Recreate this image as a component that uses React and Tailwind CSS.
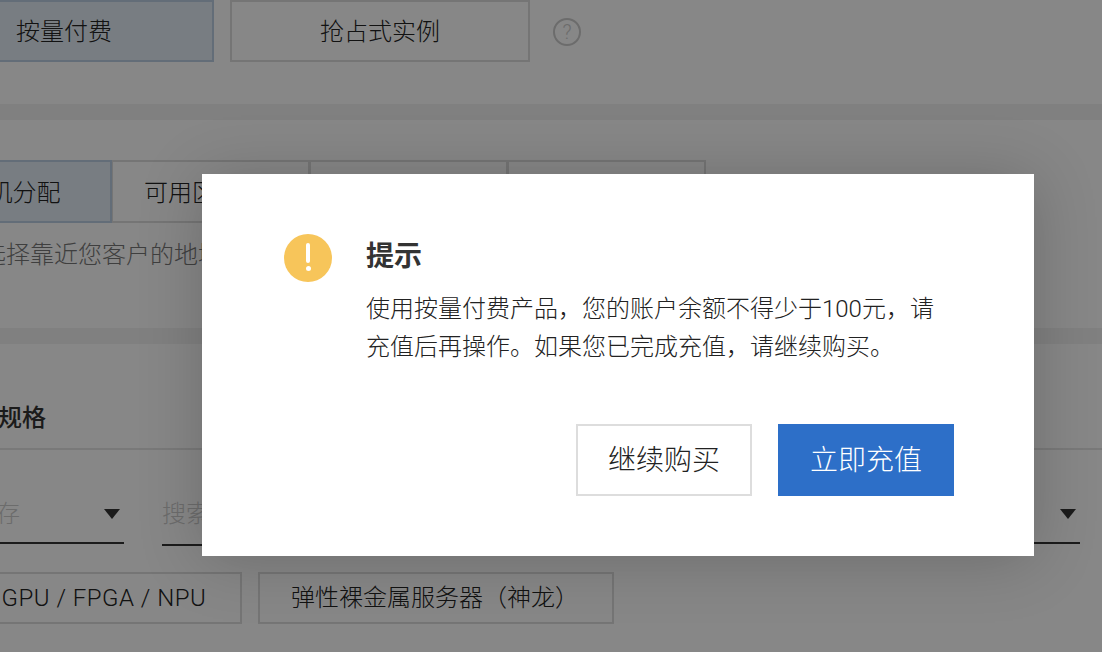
import React from "react";

const font = { fontFamily: 'Roboto, "Noto Sans CJK SC", sans-serif' };

const Caret = () => (
  <svg width="16" height="10" viewBox="0 0 16 10" className="shrink-0">
    <path d="M0 0h16L8 10z" fill="#333" />
  </svg>
);

const Tab = ({ active, children }) => (
  <div
    className={
      active
        ? "w-[199px] h-[63px] pt-[2px] flex items-center justify-center border-2 border-[#bccfe2] bg-[#e2ecf5] text-[24px] font-light text-[#222] -mr-[1px] relative"
        : "w-[199px] h-[63px] pt-[2px] pl-[31px] flex items-center justify-start border-2 border-[#ddd] text-[24px] font-light text-[#222] -mr-[1px]"
    }
  >
    {children}
  </div>
);

const Band = () => <div className="h-4 bg-[#f2f2f2]" />;

export default function App() {
  return (
    <div style={font} className="relative w-[1102px] h-[652px] overflow-hidden bg-white">
      {/* page under the dialog */}
      <div className="h-[104px] flex items-start gap-4 -ml-[86px] font-light">
        <div className="w-[300px] h-[62px] pt-[2px] flex items-center justify-center border-2 border-[#bccfe2] bg-[#e2ecf5] text-[24px] text-[#222]">
          按量付费
        </div>
        <div className="w-[300px] h-[62px] pt-[2px] flex items-center justify-center border-2 border-[#ddd] text-[24px] text-[#222]">
          抢占式实例
        </div>
        <div className="w-7 h-7 ml-[7px] mt-[18px] rounded-full border-2 border-[#ccc] flex items-center justify-center text-[20px] text-[#ccc]">
          ?
        </div>
      </div>
      <Band />

      <div className="h-[208px] pt-10 -ml-[87px]">
        <div className="flex">
          <Tab active>随机分配</Tab>
          <Tab>可用区A</Tab>
          <Tab>可用区B</Tab>
          <Tab>可用区C</Tab>
        </div>
        <p className="mt-[16px] ml-[45px] text-[24px] leading-[32px] font-light text-[#777] whitespace-nowrap">
          请选择靠近您客户的地域，以降低访问延时
        </p>
      </div>
      <Band />

      <div className="-ml-[50px] pt-[58px] text-[24px] leading-[32px] font-medium text-[#333]">实例规格</div>
      <div className="mt-[14px] h-[2px] bg-[#e5e5e5]" />

      <div className="flex items-start h-[122px] pt-[46px] font-light">
        <div className="w-[128px] h-[48px] pb-[10px] border-b-2 border-[#333] flex items-center justify-between pr-1 -ml-[4px] text-[24px] text-[#ccc]">
          <span>存</span>
          <Caret />
        </div>
        <div className="w-[400px] h-[50px] pb-[12px] ml-[38px] border-b-2 border-[#333] flex items-center text-[24px] text-[#ccc]">
          搜索
        </div>
        <div className="w-[300px] h-[48px] pb-[10px] ml-auto mr-[22px] border-b-2 border-[#333] flex items-center justify-end pr-1">
          <Caret />
        </div>
      </div>

      <div className="flex gap-4 -ml-[34px] font-light">
        <div className="w-[276px] h-[52px] flex items-center justify-center border-2 border-[#ddd] text-[24px] tracking-[0.5px] text-[#222]">
          GPU / FPGA / NPU
        </div>
        <div className="w-[356px] h-[52px] pr-[2px] flex items-center justify-center border-2 border-[#ddd] text-[24px] text-[#222]">
          弹性裸金属服务器（神龙）
        </div>
      </div>

      {/* mask + dialog */}
      <div className="absolute inset-0 bg-black/[0.47] pl-[202px] pt-[174px]">
        <div className="w-[832px] h-[382px] bg-white shadow-[0_4px_60px_rgba(0,0,0,0.2)] pt-[60px] pr-[80px] pl-[82px] flex flex-col">
          <div className="flex gap-[34px]">
            <div className="w-12 h-12 shrink-0 rounded-full bg-[#f7c55a] flex flex-col items-center pt-[9px]">
              <span className="w-[4px] h-[20px] rounded-full bg-white" />
              <span className="w-[5px] h-[5px] mt-[3px] rounded-full bg-white" />
            </div>
            <div className="flex-1">
              <div className="text-[28px] leading-[46px] font-bold text-[#333]">提示</div>
              <p className="mt-[10px] text-[24px] leading-[38px] font-light text-[#222]">
                使用按量付费产品，您的账户余额不得少于100元，请充值后再操作。如果您已完成充值，请继续购买。
              </p>
            </div>
          </div>
          <div className="mt-auto mb-[60px] flex justify-end gap-[26px]">
            <button className="w-[176px] h-[72px] pt-[2px] border-2 border-[#ddd] bg-white text-[28px] font-light text-[#222]">
              继续购买
            </button>
            <button className="w-[176px] h-[72px] pt-[2px] bg-[#2d6fc8] text-[28px] font-light text-white">
              立即充值
            </button>
          </div>
        </div>
      </div>
    </div>
  );
}
